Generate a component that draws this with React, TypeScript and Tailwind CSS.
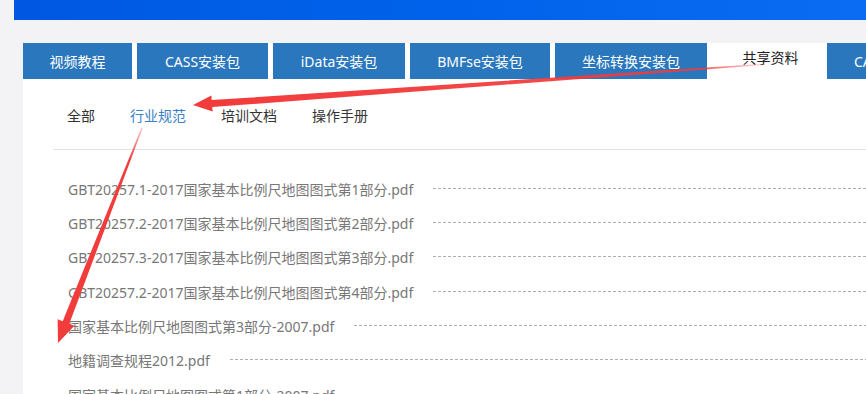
import React from 'react';

const TABS = [
  { label: '视频教程', w: 'w-[109px]' },
  { label: 'CASS安装包', w: 'w-[131px]' },
  { label: 'iData安装包', w: 'w-[132px]' },
  { label: 'BMFse安装包', w: 'w-[140px]' },
  { label: '坐标转换安装包', w: 'w-[152px]' },
];

const SUB_TABS = ['全部', '行业规范', '培训文档', '操作手册'];

const FILES = [
  'GBT20257.1-2017国家基本比例尺地图图式第1部分.pdf',
  'GBT20257.2-2017国家基本比例尺地图图式第2部分.pdf',
  'GBT20257.3-2017国家基本比例尺地图图式第3部分.pdf',
  'GBT20257.2-2017国家基本比例尺地图图式第4部分.pdf',
  '国家基本比例尺地图图式第3部分-2007.pdf',
  '地籍调查规程2012.pdf',
  '国家基本比例尺地图图式第1部分-2007.pdf',
];

const App: React.FC = () => {
  return (
    <div
      className="relative w-[866px] h-[394px] overflow-hidden bg-[#f3f3f5]"
      style={{ fontFamily: '"Noto Sans", "Noto Sans CJK SC", sans-serif' }}
    >
      {/* Banner */}
      <div className="ml-[14px] h-[20px] bg-gradient-to-r from-[#0058e2] via-[#0062ea] to-[#0a6cf2]"></div>

      {/* Main tabs */}
      <div className="mt-[23px] ml-[23px] bg-white flex gap-[5px] h-[36px] text-[14px]">
        {TABS.map((tab) => (
          <div
            key={tab.label}
            className={`${tab.w} shrink-0 bg-[#2a77bd] text-white flex items-center justify-center pt-[1px]`}
          >
            {tab.label}
          </div>
        ))}
        <div className="w-[115px] -mr-[5px] shrink-0 text-[#222] flex items-center justify-center pb-[8px] pl-[2px]">共享资料</div>
        <div className="w-[120px] shrink-0 bg-[#2a77bd] text-white flex items-center pl-[27px] pt-[1px] whitespace-nowrap">
          CASS插件
        </div>
      </div>

      {/* Panel */}
      <div className="ml-[23px] bg-white h-[400px] pl-[30px]">
        <div className="h-[71px] border-b border-[#e3e3e3] flex items-center gap-[35px] pl-[14px] pt-[3px] text-[14px] text-[#333]">
          {SUB_TABS.map((s) => (
            <span key={s} className={s === '行业规范' ? 'text-[#3a80c6]' : ''}>
              {s}
            </span>
          ))}
        </div>

        <div className="pt-[22px] pl-[15px]">
          {FILES.map((f, i) => (
            <div key={i} className="h-[34.33px] flex items-center text-[14px] text-[#777]">
              <span className="whitespace-nowrap">{f}</span>
              <div className="flex-1 ml-[20px] mb-[2px] h-px bg-[repeating-linear-gradient(90deg,#adadad_0_3px,transparent_3px_5px)]"></div>
            </div>
          ))}
        </div>
      </div>

      {/* Red annotation arrows */}
      <svg className="absolute inset-0 pointer-events-none" width="866" height="394" viewBox="0 0 866 394">
        <defs>
          <linearGradient id="fade1" x1="765" y1="64" x2="193" y2="105" gradientUnits="userSpaceOnUse">
            <stop offset="0" stopColor="#f23b3b" stopOpacity="0.15" />
            <stop offset="0.12" stopColor="#f23b3b" stopOpacity="0.9" />
            <stop offset="1" stopColor="#f23b3b" />
          </linearGradient>
          <linearGradient id="fade2" x1="142" y1="128" x2="58" y2="343" gradientUnits="userSpaceOnUse">
            <stop offset="0" stopColor="#f23b3b" stopOpacity="0.3" />
            <stop offset="0.15" stopColor="#f23b3b" />
            <stop offset="1" stopColor="#f23b3b" />
          </linearGradient>
        </defs>
        <polygon
          fill="url(#fade1)"
          points="765,63.6 211.7,100.1 211.4,95.6 193,105 212.6,111.6 212.3,107.1 765,64.8"
        />
        <polygon
          fill="url(#fade2)"
          points="141.4,127.8 62.7,321.2 57.6,319.2 58,343 74.4,325.8 69.3,323.8 142.6,128.3"
        />
      </svg>
    </div>
  );
};

export default App;
